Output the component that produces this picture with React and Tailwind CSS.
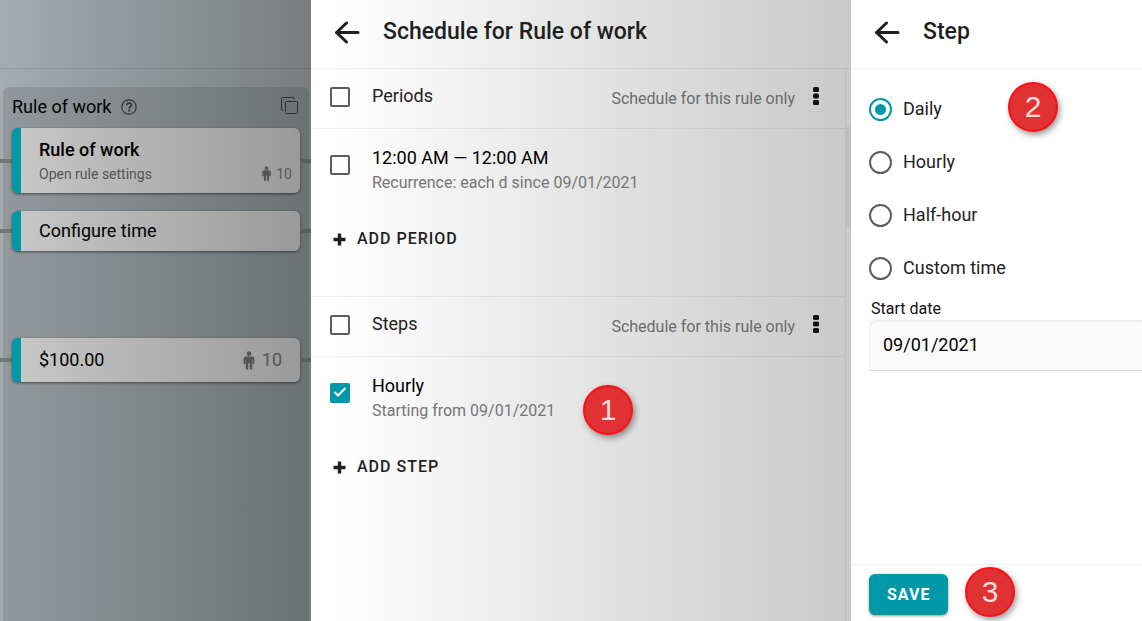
import { useState } from "react";

const Badge = ({ children, className = "" }) => (
    <span className={`absolute flex size-[50px] items-center justify-center rounded-full border-2 border-[#fb1015] bg-[#e03133] pb-[2px] font-['Liberation_Sans',sans-serif] text-[30px] text-[#ffdede] shadow-[2px_3px_6px_rgba(0,0,0,0.4)] ${className}`}>
        {children}
    </span>
);

const BackButton = () => (
    <button type="button" aria-label="Back" className="flex size-8 items-center justify-center text-[#1f1f1f]">
        <svg viewBox="0 0 26 24" className="h-6 w-[26px]" fill="none" stroke="currentColor" strokeWidth="3">
            <path d="M24 12.500H2.500M12.500 3L2.500 12.500l10 9.500" strokeLinejoin="round" strokeLinecap="round" />
        </svg>
    </button>
);

const PanelHeader = ({ title }) => (
    <header className="flex h-[69px] shrink-0 items-center gap-5 border-b border-black/6 pb-1 pl-5">
        <BackButton />
        <h1 className="text-[23px] font-medium text-[#1f1f1f]">{title}</h1>
    </header>
);

const Checkbox = ({ id, checked, onChange, className = "" }) => (
    <span className={`grid size-5 shrink-0 ${className}`}>
        <input
            type="checkbox"
            id={id}
            checked={checked}
            onChange={onChange}
            className="col-start-1 row-start-1 size-5 appearance-none rounded-[2px] border-2 border-[#5c5c5c] checked:border-[#0097a7] checked:bg-[#0097a7]"
        />
        {checked && (
            <svg viewBox="0 0 20 20" className="pointer-events-none col-start-1 row-start-1 size-5" fill="none" stroke="white" strokeWidth="2">
                <path d="M4.500 9l3.500 3.500L15.500 5" />
            </svg>
        )}
    </span>
);

const Section = ({ name, item, detail, action, checked, className = "", children }) => {
    const [all, setAll] = useState(false);
    const [selected, setSelected] = useState(checked);

    return (
        <section className={className}>
            <div className="flex h-[60px] items-center border-b border-black/6 pr-[25px] pb-1 pl-[19px]">
                <Checkbox id={name} checked={all} onChange={() => setAll(!all)} />
                <label htmlFor={name} className="ml-[22px] pb-[2px] text-lg text-[#222]">{name}</label>
                <span className="ml-auto pt-1 text-base text-[#6b6b6b]">Schedule for this rule only</span>
                <button type="button" aria-label={`${name} menu`} className="ml-4 pb-[2px] text-[#111]">
                    <svg viewBox="0 0 9 20" className="block h-5 w-[9px]" fill="currentColor">
                        <rect x="2" y="1" width="6" height="5" rx="1.500" />
                        <rect x="2" y="7.500" width="6" height="5" rx="1.500" />
                        <rect x="2" y="14" width="6" height="5" rx="1.500" />
                    </svg>
                </button>
            </div>
            <div className="relative flex items-start pt-4 pl-[19px]">
                <Checkbox id={`${name}-item`} checked={selected} onChange={() => setSelected(!selected)} className="mt-[10px]" />
                <label htmlFor={`${name}-item`} className="ml-[22px]">
                    <span className="block text-lg leading-[26px] text-black">{item}</span>
                    <span className="block text-base leading-6 text-[#757575]">{detail}</span>
                </label>
                {children}
            </div>
            <button type="button" className="mt-[26px] mb-[39px] flex h-9 items-center gap-[11px] pl-[22px] text-base font-medium tracking-[1px] text-[#1f1f1f]">
                <svg viewBox="0 0 13 13" className="size-[13px]" stroke="currentColor" strokeWidth="3.400">
                    <path d="M6.500 0.500v12M0.500 6.500h12" />
                </svg>
                {action}
            </button>
        </section>
    );
};

const Person = ({ className }) => (
    <svg viewBox="0 0 12 20" className={className} fill="currentColor">
        <circle cx="6" cy="2.800" r="2.500" />
        <path d="M3 5.800h6a2.500 2.500 0 0 1 2.700 2.500V13a1 1 0 0 1-2 0V9h-.3v9.500a1.200 1.200 0 0 1-2.700 0V13h-1.400v5.500a1.200 1.200 0 0 1-2.700 0V9h-.3v4a1 1 0 0 1-2 0V8.300A2.500 2.500 0 0 1 3 5.800z" />
    </svg>
);

// Card on the timeline, with the connector line running out on both sides
const RuleCard = ({ children, className = "" }) => (
    <div className={`flex items-center ${className}`}>
        <span className="h-1 w-3 bg-[#72777a]" />
        <button type="button" className="flex h-full flex-1 items-center rounded-md border-l-[9px] border-[#0097a7] bg-linear-to-r from-[#c7c7c7] to-[#9a9a9a] pl-[18px] text-left text-lg text-black shadow-[0_1px_3px_rgba(0,0,0,0.5)]">
            {children}
        </button>
        <span className="h-1 w-[11px] bg-[#595e60]" />
    </div>
);

const Timeline = () => (
    <aside className="flex flex-col bg-linear-to-r from-[#a4acaf] to-[#797d80]">
        <div className="h-[69px] border-b border-black/10" />
        <div className="mt-[18px] grid flex-1 grid-cols-1 grid-rows-1">
            <div className="col-start-1 row-start-1 mr-[2px] ml-[3px] rounded-t-md bg-linear-to-r from-[#92989b] to-[#6c7174]" />
            <div className="col-start-1 row-start-1">
                <div className="flex h-[41px] items-center pr-[13px] pb-[2px] pl-3">
                    <h2 className="text-lg text-black">Rule of work</h2>
                    <button type="button" aria-label="Help" className="ml-[10px] text-[#333]">
                        <svg viewBox="0 0 16 16" className="size-4" fill="none" stroke="currentColor">
                            <circle cx="8" cy="8" r="7.200" strokeWidth="1.200" />
                            <path d="M5.700 6.300C5.700 3.300 10.500 3.400 10.500 6c0 1.700-2.300 1.700-2.300 3.500" strokeWidth="1.800" />
                            <path d="M8.200 10.700v1.900" strokeWidth="1.900" />
                        </svg>
                    </button>
                    <button type="button" aria-label="Copy" className="ml-auto pb-[2px] text-[#2d2d2d]">
                        <svg viewBox="0 0 17 17" className="size-[17px]" fill="none" stroke="currentColor">
                            <rect x="4.500" y="4.500" width="12" height="12" rx="1" />
                            <path d="M2.500 13.500h-1a1 1 0 0 1-1-1v-11a1 1 0 0 1 1-1h10.500a1 1 0 0 1 1 1v1" />
                        </svg>
                    </button>
                </div>
                <RuleCard className="h-[65px]">
                    <span className="flex-1 pt-[2px] pr-2">
                        <span className="block leading-6 font-medium">Rule of work</span>
                        <span className="flex items-center text-sm leading-6 text-[#555]">
                            Open rule settings
                            <Person className="mr-[5px] ml-auto h-[15px] w-[9px]" />
                            10
                        </span>
                    </span>
                </RuleCard>
                <RuleCard className="mt-[18px] h-10">Configure time</RuleCard>
                <RuleCard className="mt-[87px] h-11">
                    <span>$100.00</span>
                    <span className="ml-auto flex items-center pr-[18px] text-[#555]">
                        <Person className="mr-[7px] h-[19px] w-3" />
                        10
                    </span>
                </RuleCard>
            </div>
        </div>
    </aside>
);

const SchedulePanel = () => (
    <main className="flex flex-col bg-linear-to-r from-white from-4% to-[#c9c9c9]">
        <PanelHeader title="Schedule for Rule of work" />
        <div className="flex flex-1">
            <div className="flex-1">
                <Section name="Periods" item="12:00 AM — 12:00 AM" detail="Recurrence: each d since 09/01/2021" action="ADD PERIOD" checked={false} />
                <Section name="Steps" item="Hourly" detail="Starting from 09/01/2021" action="ADD STEP" checked className="border-t border-black/6">
                    <Badge className="top-7 left-[272px]">1</Badge>
                </Section>
            </div>
            <div className="w-[6px] border-l border-black/5 pt-[58px]">
                <div className="h-[100px] bg-black/5" />
            </div>
        </div>
    </main>
);

const StepPanel = () => {
    const [step, setStep] = useState("Daily");
    const [date, setDate] = useState("09/01/2021");

    return (
        <form className="flex flex-col bg-white" onSubmit={(e) => e.preventDefault()}>
            <PanelHeader title="Step" />
            <div className="relative flex-1 pt-[14px] pl-[18px]">
                {["Daily", "Hourly", "Half-hour", "Custom time"].map((option) => (
                    <label key={option} className="flex h-[53px] items-center gap-[11px] text-lg text-[#222]">
                        <input
                            type="radio"
                            name="step"
                            checked={step === option}
                            onChange={() => setStep(option)}
                            className="size-[23px] appearance-none rounded-full border-2 border-[#5c5c5c] bg-clip-content p-1 checked:border-[#0097a7] checked:bg-[#0097a7]"
                        />
                        <span className="pb-[2px]">{option}</span>
                    </label>
                ))}
                <label htmlFor="start" className="block pt-[2px] pl-[2px] text-base leading-[23px] text-[#111]">Start date</label>
                <input
                    id="start"
                    type="text"
                    value={date}
                    onChange={(e) => setDate(e.target.value)}
                    className="block h-[51px] w-full rounded-tl-md border-b border-b-[#dcdcdc] bg-[#fafafa] pb-[2px] pl-[14px] text-lg text-black shadow-[inset_1px_2px_2px_rgba(0,0,0,0.06)] outline-none"
                />
                <Badge className="top-[13px] left-[157px]">2</Badge>
            </div>
            <footer className="relative border-t border-black/6 pt-[9px] pb-[6px] pl-[18px]">
                <button type="submit" className="h-[41px] rounded-md bg-[#0097a7] px-[18px] text-base font-bold tracking-[1px] text-white shadow-[0_1px_3px_rgba(0,0,0,0.4)]">
                    SAVE
                </button>
                <Badge className="top-[2px] left-[114px]">3</Badge>
            </footer>
        </form>
    );
};

const App = () => (
    <div className="grid min-h-screen grid-cols-[311fr_540fr_291fr] font-[Roboto,sans-serif]">
        <Timeline />
        <SchedulePanel />
        <StepPanel />
    </div>
);

export default App;
